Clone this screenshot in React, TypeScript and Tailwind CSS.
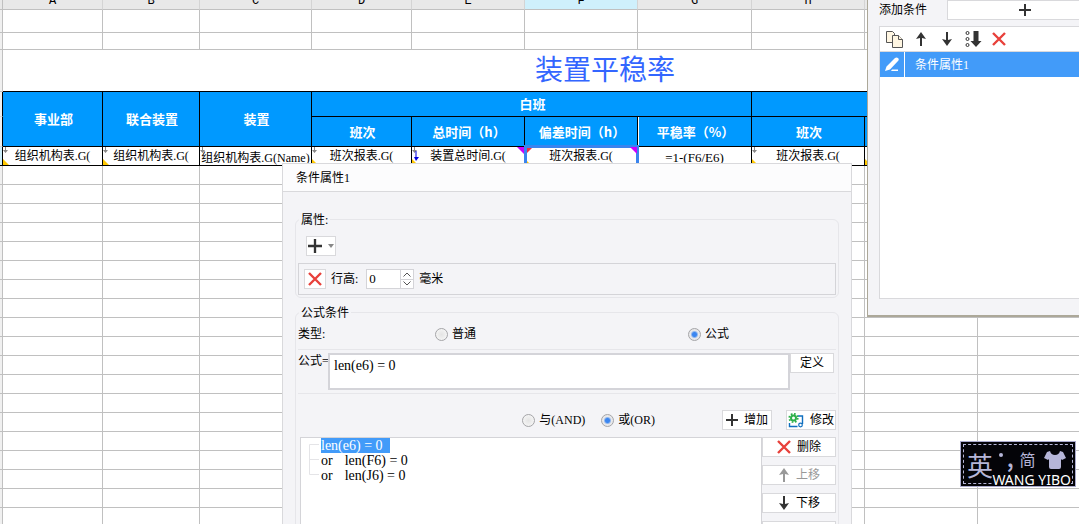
import type { ReactNode } from 'react';
import clsx from 'clsx';

const COLUMNS = ['A', 'B', 'C', 'D', 'E', 'F', 'G', 'H', 'I', 'J', 'K'];
const COLUMN_WIDTHS = [100, 97, 112, 100, 113, 113, 114, 113, 113, 113, 116];
const EMPTY_ROWS = Array.from({ length: 20 }, (_, i) => i + 7);

const GUTTER = 'border-r border-b border-[#c0c0c0] bg-[#f0f0f0]';
const GUTTER_DARK = 'border-r border-b border-b-[#d8d8d8] border-r-black bg-[#f0f0f0]';
const GRID_CELL = 'border-r border-b border-[#c0c0c0]';
const HEAD_CELL =
  "border-r border-b border-black bg-[#0099ff] pl-0.5 font-['Noto_Sans_CJK_SC',sans-serif] text-[13px] leading-4 font-bold text-white";
const BUTTON =
  'flex h-5 items-center justify-center gap-1.5 border border-[#d9d9dc] bg-white leading-4';
const RADIO =
  'size-[13px] appearance-none rounded-full border border-[#a5a5a8] bg-[radial-gradient(circle,#e4e4e4,#fafafa)] checked:bg-[radial-gradient(circle,#3b86f0_0_2px,#e8e8ea_4px)]';

/* ---------- icons ---------- */

function PlusIcon({ size = 12 }: { size?: number }) {
  return (
    <svg width={size} height={size} viewBox="0 0 12 12" stroke="#333" strokeWidth="2">
      <path d="M6 0v12M0 6h12" />
    </svg>
  );
}

function CrossIcon() {
  return (
    <svg width="14" height="14" viewBox="0 0 14 14" stroke="#e8413b" strokeWidth="2.4" fill="none">
      <path d="M1 1l12 12M13 1L1 13" />
    </svg>
  );
}

function ArrowIcon({ up = false, color = '#333' }: { up?: boolean; color?: string }) {
  return (
    <svg width="12" height="14" viewBox="0 0 12 14" className={up ? 'rotate-180' : ''}>
      <path d="M5 0h2v8l4-1-5 7-5-7 4 1z" fill={color} />
    </svg>
  );
}

function CopyIcon() {
  return (
    <svg width="17" height="17" viewBox="0 0 17 17" fill="#fff6e2" stroke="#555" strokeWidth="1">
      <path d="M.5.5h6l2 2v9h-8z" fill="#fff6e2" />
      <path d="M6.500 4.500h6l4 4v8h-10z" />
      <path d="M12.500 4.500v4h4" />
    </svg>
  );
}

function MoveBottomIcon() {
  return (
    <svg width="17" height="16" viewBox="0 0 17 16">
      <g fill="none" stroke="#333">
        <circle cx="2.500" cy="2" r="1.500" />
        <circle cx="2.500" cy="8" r="1.500" />
        <circle cx="2.500" cy="14" r="1.500" />
      </g>
      <path d="M8.500 0h5v10h3l-5.500 6-5.500-6h3z" fill="#333" />
    </svg>
  );
}

function PencilIcon() {
  return (
    <svg width="14" height="15" viewBox="0 0 14 15" fill="#fff">
      <path d="M0 14l1.500-4.500L10 1q1.500-1 3 0 1.500 1.500 0 3L5 12.500z" />
      <path d="M7 12.500h6V14H6z" />
    </svg>
  );
}

function ModifyIcon() {
  return (
    <svg width="16" height="15" viewBox="0 0 16 15" fill="none">
      <path d="M10 3h4.500v8M1.500 10v3.500h8" stroke="#0f6fbf" strokeWidth="1.400" />
      <circle cx="12.500" cy="12" r="1.800" stroke="#0f6fbf" strokeWidth="1.200" />
      <circle cx="5.500" cy="5" r="2.500" stroke="#2fb14b" strokeWidth="2" />
      <circle cx="5.500" cy="5" r="4.200" stroke="#2fb14b" strokeWidth="1.800" strokeDasharray="1.700 1.600" />
    </svg>
  );
}

function ShirtIcon() {
  return (
    <svg width="22" height="18" viewBox="0 0 22 18" fill="#b6b6d8">
      <path d="M6 0q1 4 5 4t5-4l3 1 3 6-4 2-1-1v8q0 2-2 2H7q-2 0-2-2V8L4 9 0 7l3-6z" />
    </svg>
  );
}

/* ---------- spreadsheet ---------- */

type Marks = { arrow?: boolean; blueArrow?: boolean; data?: boolean; purple?: boolean; red?: boolean };

function FormulaCell({ children, marks = {}, low, selected }: {
  children?: ReactNode;
  marks?: Marks;
  low?: boolean;
  selected?: boolean;
}) {
  return (
    <td className={clsx('relative border-r border-b border-black bg-white text-xs leading-4', selected && 'z-10')}>
      <div className={clsx('h-4 whitespace-nowrap', low && 'pt-0.5')}>
        {children}
      </div>
      {marks.arrow && (
        <svg className="absolute top-0 left-0" width="5" height="6" viewBox="0 0 5 6">
          <path d="M2 0h1v3h2L2.500 6 0 3h2z" fill="#888" />
        </svg>
      )}
      {marks.blueArrow && (
        <svg className="absolute top-1 left-0.5" width="5" height="10" viewBox="0 0 5 10">
          <path d="M1.500 0h1v6H5L2 10 0 6h1.500z" fill="#0000e0" />
        </svg>
      )}
      {marks.data && (
        <svg className="absolute bottom-0 left-0" width="6" height="6" viewBox="0 0 6 6">
          <path d="M0 0l6 6H0z" fill="#ffc800" />
        </svg>
      )}
      {selected && (
        <div className="pointer-events-none absolute -top-0.5 -right-0.5 -bottom-0.5 -left-px border-[3px] border-[#3a84ee]" />
      )}
      {marks.purple && (
        <svg className="absolute top-0 right-0" width="7" height="7" viewBox="0 0 7 7">
          <path d="M0 0h7v7z" fill="#cc00ff" />
        </svg>
      )}
      {marks.red && (
        <svg className="absolute top-px left-0.5" width="5" height="5" viewBox="0 0 5 5">
          <path d="M0 0h5L0 5z" fill="#f03040" />
        </svg>
      )}
    </td>
  );
}

function Spreadsheet() {
  return (
    <table className="isolate w-[1207px] table-fixed border-separate border-spacing-0 text-center">
      <colgroup>
        <col className="w-[3px]" />
        {COLUMN_WIDTHS.map((width, i) => (
          <col key={COLUMNS[i]} style={{ width }} />
        ))}
      </colgroup>
      <tbody>
        <tr className="h-2.5">
          <th className="border-r border-b border-[#c0c0c0] bg-[#e8e8e8] p-0" />
          {COLUMNS.map((name) => (
            <th
              key={name}
              className={clsx(
                'border-r border-b border-r-[#d4d4d4] border-b-[#c0c0c0] p-0 font-normal',
                name === 'F' ? 'bg-[#cff0fc]' : 'bg-[#e8e8e8]',
              )}
            >
              <div className="flex h-[9px] items-end justify-center overflow-hidden font-['Liberation_Mono',monospace] text-xs leading-4">
                {name}
              </div>
            </th>
          ))}
        </tr>
        <tr className="h-[23px]">
          <th className={GUTTER} />
          {COLUMNS.map((name) => <td key={name} className={GRID_CELL} />)}
        </tr>
        <tr className="h-[17px]">
          <th className={GUTTER} />
          {COLUMNS.map((name) => <td key={name} className={GRID_CELL} />)}
        </tr>
        <tr className="h-[42px]">
          <th className={GUTTER} />
          <td
            colSpan={11}
            className="border-b border-black text-[28px] leading-8 text-[#3366ff]"
          >
            装置平稳率
          </td>
        </tr>
        <tr className="h-[25px]">
          <th className={GUTTER_DARK} />
          <td rowSpan={2} className={HEAD_CELL}>事业部</td>
          <td rowSpan={2} className={HEAD_CELL}>联合装置</td>
          <td rowSpan={2} className={HEAD_CELL}>装置</td>
          <td colSpan={4} className={HEAD_CELL}>白班</td>
          <td colSpan={4} className={HEAD_CELL} />
        </tr>
        <tr className="h-[30px]">
          <th className={GUTTER_DARK} />
          <td className={HEAD_CELL}>班次</td>
          <td className={HEAD_CELL}>总时间（h）</td>
          <td className={HEAD_CELL}>偏差时间（h）</td>
          <td className={clsx(HEAD_CELL, 'shadow-[inset_1px_0_0_#fff]')}>平稳率（%）</td>
          <td className={HEAD_CELL}>班次</td>
          <td className={HEAD_CELL} />
          <td className={HEAD_CELL} />
          <td className={HEAD_CELL} />
        </tr>
        <tr className="h-[19px]">
          <th className="border-r border-b border-black bg-[#cff0fc]" />
          <FormulaCell marks={{ arrow: true, data: true }}>组织机构表.G(</FormulaCell>
          <FormulaCell marks={{ arrow: true, data: true }}>组织机构表.G(</FormulaCell>
          <FormulaCell marks={{ arrow: true }} low>组织机构表.G(Name)</FormulaCell>
          <FormulaCell marks={{ arrow: true, data: true }}>班次报表.G(</FormulaCell>
          <FormulaCell marks={{ arrow: true, blueArrow: true, data: true, purple: true }}>
            装置总时间.G(
          </FormulaCell>
          <FormulaCell marks={{ data: true, purple: true, red: true }} selected>
            班次报表.G(
          </FormulaCell>
          <FormulaCell low><span className="text-[13px]">=1-(F6/E6)</span></FormulaCell>
          <FormulaCell marks={{ arrow: true, data: true }}>班次报表.G(</FormulaCell>
          <FormulaCell marks={{ data: true }} />
          <FormulaCell />
          <FormulaCell />
        </tr>
        {EMPTY_ROWS.map((row) => (
          <tr key={row} className="h-[19px]">
            <th className={GUTTER} />
            {COLUMNS.map((name) => <td key={name} className={GRID_CELL} />)}
          </tr>
        ))}
      </tbody>
    </table>
  );
}

/* ---------- condition list window ---------- */

function ConditionListPanel() {
  return (
    <section className="absolute top-0 left-[867px] flex h-[317px] w-[248px] flex-col border-b-2 border-l border-[#aca899] bg-[#f4f4f7] pr-3 pb-4 pl-[11px]">
      <div className="flex h-5 shrink-0 items-center gap-5">
        <span className="whitespace-nowrap">添加条件</span>
        <button aria-label="添加" className={clsx(BUTTON, 'flex-1')}>
          <PlusIcon />
        </button>
      </div>
      <div className="mt-1.5 flex-1 border border-[#d9d9dc] bg-white">
        <div className="flex h-[25px] items-center gap-3 border-b border-[#d9d9dc] pl-1.5">
          <button aria-label="复制"><CopyIcon /></button>
          <div className="flex items-center gap-3.5">
            <button aria-label="上移"><ArrowIcon up /></button>
            <button aria-label="下移"><ArrowIcon /></button>
          </div>
          <div className="flex items-center gap-2.5">
            <button aria-label="置底"><MoveBottomIcon /></button>
            <button aria-label="删除"><CrossIcon /></button>
          </div>
        </div>
        <div className="flex h-[25px] items-center bg-[#429bf9] text-white">
          <span className="flex h-full w-[25px] items-center justify-center border-r border-white">
            <PencilIcon />
          </span>
          <span className="pl-2.5">条件属性1</span>
        </div>
      </div>
    </section>
  );
}

/* ---------- condition editor window ---------- */

function Radio({ name, label, defaultChecked }: {
  name: string;
  label: string;
  defaultChecked?: boolean;
}) {
  return (
    <label className="flex items-center gap-1 whitespace-nowrap">
      <input type="radio" name={name} defaultChecked={defaultChecked} className={RADIO} />
      {label}
    </label>
  );
}

function Spinner() {
  return (
    <div className="ml-2 flex h-5 w-12 border border-[#d4d4d8] bg-white">
      <input
        id="row-height"
        defaultValue="0"
        className="w-[33px] pl-0.5 text-[13px] leading-4 outline-none"
      />
      <div className="flex flex-1 flex-col border-l border-[#d4d4d8]">
        <button aria-label="增大" className="flex flex-1 items-center justify-center border-b border-[#d4d4d8]">
          <svg width="8" height="5" viewBox="0 0 8 5" fill="none" stroke="#555">
            <path d="M.5 4.500L4 1l3.500 3.500" />
          </svg>
        </button>
        <button aria-label="减小" className="flex flex-1 items-center justify-center">
          <svg width="8" height="5" viewBox="0 0 8 5" fill="none" stroke="#555">
            <path d="M.5.5L4 4 7.500.5" />
          </svg>
        </button>
      </div>
    </div>
  );
}

function ConditionTree() {
  return (
    <ul className="flex-1 border border-[#d4d4d8] bg-white pl-5 text-sm leading-[15px]">
      <li className="relative h-[15px]">
        <svg className="absolute top-1.5 -left-3" width="10" height="32" fill="none" stroke="#e4e4e7">
          <path d="M10 .5H.5v30H10M.5 15.500H10" />
        </svg>
        <span className="block w-[69px] bg-[#429bf9] leading-[15px] text-white">len(e6) = 0</span>
      </li>
      <li className="flex h-[15px] gap-3"><span>or</span><span>len(F6) = 0</span></li>
      <li className="flex h-[15px] gap-3"><span>or</span><span>len(J6) = 0</span></li>
    </ul>
  );
}

function ConditionDialog() {
  return (
    <section className="absolute top-[163px] -bottom-8 left-[282px] flex w-[570px] flex-col border border-[#d9d9dc] bg-[#f4f4f7]">
      <h2 className="flex h-7 shrink-0 items-center border-b border-[#d9d9dc] bg-[#fcfcfd] px-[13px]">
        条件属性1
      </h2>
      <div className="flex flex-1 flex-col gap-[7px] px-3 pt-5">
        <fieldset className="rounded-md border border-[#e6e6ea] px-0.5 pb-0.5">
          <legend className="ml-px h-3.5 px-0.5 leading-4">属性:</legend>
          <button aria-label="添加属性" className={clsx(BUTTON, 'mt-2.5 ml-2 w-[30px] gap-1')}>
            <PlusIcon size={14} />
            <svg width="6" height="4" viewBox="0 0 6 4"><path d="M0 0h6L3 4z" fill="#888" /></svg>
          </button>
          <div className="mt-[7px] flex h-8 items-center border border-[#d4d4d8] px-[5px]">
            <button aria-label="删除属性" className={clsx(BUTTON, 'w-[22px]')}><CrossIcon /></button>
            <label htmlFor="row-height" className="ml-[5px]">行高:</label>
            <Spinner />
            <span className="ml-[5px]">毫米</span>
          </div>
        </fieldset>

        <fieldset className="flex min-h-0 flex-1 flex-col rounded-md border border-[#e6e6ea] px-0.5">
          <legend className="ml-px h-3.5 px-0.5 leading-4">公式条件</legend>
          <div className="grid h-[31px] grid-cols-[137px_253px_auto] items-center border-b border-[#e6e6ea]">
            <span>类型:</span>
            <Radio name="kind" label="普通" />
            <Radio name="kind" label="公式" defaultChecked />
          </div>
          <div className="flex h-11 items-start border-b border-[#e6e6ea] py-[3px]">
            <label htmlFor="formula" className="w-[30px] whitespace-nowrap">公式=</label>
            <textarea
              id="formula"
              defaultValue="len(e6) = 0"
              className="h-[37px] flex-1 resize-none border-2 border-[#d4d4d9] bg-white px-1 py-[3px] text-sm leading-4 outline-none"
            />
            <button className={clsx(BUTTON, 'mr-0.5 w-11')}>定义</button>
          </div>
          <div className="flex h-[43px] items-start justify-end pt-4">
            <div className="flex h-5 items-center gap-4 pr-[67px]">
              <Radio name="join" label="与(AND)" />
              <Radio name="join" label="或(OR)" defaultChecked />
            </div>
            <button className={clsx(BUTTON, 'mr-3.5 w-[50px]')}><PlusIcon />增加</button>
            <button className={clsx(BUTTON, 'w-[50px]')}><ModifyIcon />修改</button>
          </div>
          <div className="flex min-h-0 flex-1 pl-0.5">
            <ConditionTree />
            <div className="flex w-[74px] flex-col gap-2">
              <button className={clsx(BUTTON, 'shrink-0')}><CrossIcon />删除</button>
              <button disabled className={clsx(BUTTON, 'shrink-0 text-[#999]')}>
                <ArrowIcon up color="#999" />上移
              </button>
              <button className={clsx(BUTTON, 'shrink-0')}><ArrowIcon />下移</button>
              <button aria-label="更多" className={clsx(BUTTON, 'shrink-0')} />
            </div>
          </div>
        </fieldset>
      </div>
    </section>
  );
}

/* ---------- input method bar ---------- */

function InputMethodBar() {
  return (
    <div className="absolute top-[441px] left-[960px] h-[46px] w-[116px] border border-[#a9a9cc] bg-[#040408] p-0.5 font-['Noto_Sans_CJK_SC',sans-serif] text-[#b6b6d8]">
      <div className="flex h-full items-start border border-dashed border-[#b6b6d8] pl-[3px]">
        <span className="pt-1 text-[26px] leading-8">英</span>
        <span className="mt-2 ml-1.5 size-1 rounded-full bg-[#b6b6d8]" />
        <span className="ml-1 pt-1 text-xl leading-5 font-bold">,</span>
        <span className="ml-1.5 pt-1 text-base leading-5">简</span>
        <span className="ml-2 pt-1.5"><ShirtIcon /></span>
      </div>
      <span className="absolute right-1 bottom-0 bg-[#040408] font-['Noto_Sans',sans-serif] text-sm leading-3 whitespace-nowrap text-white">
        WANG YIBO
      </span>
    </div>
  );
}

export default function App() {
  return (
    <main className="relative h-screen overflow-hidden bg-white font-['Liberation_Serif','Noto_Sans_CJK_SC',serif] text-xs leading-4 text-black">
      <Spreadsheet />
      <ConditionListPanel />
      <ConditionDialog />
      <InputMethodBar />
    </main>
  );
}
